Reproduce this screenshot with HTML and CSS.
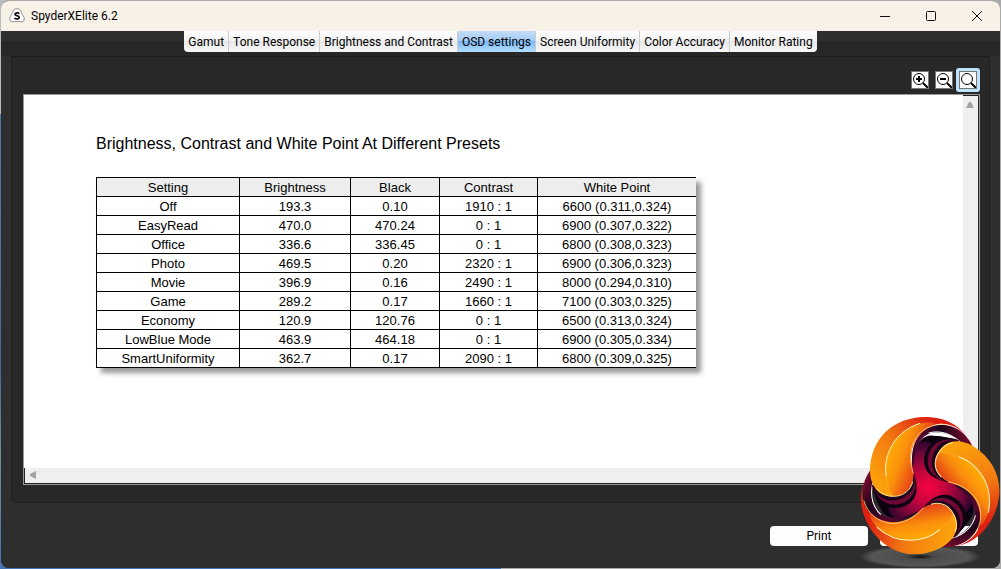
FILE: index.html
```
<!DOCTYPE html>
<html lang="en">
<head>
  <meta charset="UTF-8" />
  <meta name="viewport" content="width=device-width, initial-scale=1.0"/>
  <title>SpyderXElite 6.2</title>
  <link rel="stylesheet" href="styles.css">
</head>
<body>

  <div class="window">
    <header class="titlebar">
      <svg class="app-icon" viewBox="0 0 16 16">
        <path d="M8 .7C10.500.7 11.900 2 12.300 4.200C12.600 6 15.300 8.300 15.300 10.800C15.300 13.600 13 14 11 13.600C9 13.200 7 13.200 5 13.600C3 14 .7 13.600.7 10.800C.7 8.300 3.400 6 3.700 4.200C4.100 2 5.500.7 8 .7Z" fill="#fff" stroke="#777" stroke-width=".8"/>
        <path d="M10.200 5.800C9.300 4.500 5.900 4.600 6 6.400C6.100 8.100 10.200 7.200 10.200 9.300C10.200 11.400 6.500 11.400 5.600 9.800" fill="none" stroke="#111" stroke-width="1.700"/>
      </svg>
      <h1>SpyderXElite 6.2</h1>
      <div class="caption-buttons">
        <button type="button" aria-label="Minimize"><svg viewBox="0 0 12 12"><path d="M1 6.500h10"/></svg></button>
        <button type="button" aria-label="Maximize"><svg viewBox="0 0 12 12"><rect x="1.500" y="1.500" width="9" height="9" rx="1"/></svg></button>
        <button type="button" aria-label="Close"><svg viewBox="0 0 12 12"><path d="M1 1l10 10M11 1L1 11"/></svg></button>
      </div>
    </header>

    <main class="content">
      <nav class="tabs">
        <button type="button">Gamut</button>
        <button type="button">Tone Response</button>
        <button type="button">Brightness and Contrast</button>
        <button type="button" class="active">OSD settings</button>
        <button type="button">Screen Uniformity</button>
        <button type="button">Color Accuracy</button>
        <button type="button">Monitor Rating</button>
      </nav>

      <section class="panel">
        <div class="toolbar">
          <button type="button" aria-label="Zoom in">
            <svg viewBox="0 0 16 16"><circle cx="7" cy="7" r="5.500"/><path d="M11 11l5 5" stroke-width="2"/><path d="M4 7h6M7 4v6" stroke-width="2"/></svg>
          </button>
          <button type="button" aria-label="Zoom out">
            <svg viewBox="0 0 16 16"><circle cx="7" cy="7" r="5.500"/><path d="M11 11l5 5" stroke-width="2"/><path d="M4 7h6" stroke-width="2"/></svg>
          </button>
          <button type="button" class="active" aria-label="Fit">
            <svg viewBox="0 0 16 16"><circle cx="7" cy="7" r="5.500"/><path d="M11 11l5 5" stroke-width="2"/></svg>
          </button>
        </div>

        <div class="viewer">
          <article class="report">
            <h2>Brightness, Contrast and White Point At Different Presets</h2>
            <div class="table-wrap">
              <table>
                <colgroup>
                  <col class="setting"><col class="brightness"><col class="black"><col class="contrast"><col>
                </colgroup>
                <thead>
                  <tr><th>Setting</th><th>Brightness</th><th>Black</th><th>Contrast</th><th>White Point</th></tr>
                </thead>
                <tbody>
                  <tr><td>Off</td><td>193.3</td><td>0.10</td><td>1910 : 1</td><td>6600 (0.311,0.324)</td></tr>
                  <tr><td>EasyRead</td><td>470.0</td><td>470.24</td><td>0 : 1</td><td>6900 (0.307,0.322)</td></tr>
                  <tr><td>Office</td><td>336.6</td><td>336.45</td><td>0 : 1</td><td>6800 (0.308,0.323)</td></tr>
                  <tr><td>Photo</td><td>469.5</td><td>0.20</td><td>2320 : 1</td><td>6900 (0.306,0.323)</td></tr>
                  <tr><td>Movie</td><td>396.9</td><td>0.16</td><td>2490 : 1</td><td>8000 (0.294,0.310)</td></tr>
                  <tr><td>Game</td><td>289.2</td><td>0.17</td><td>1660 : 1</td><td>7100 (0.303,0.325)</td></tr>
                  <tr><td>Economy</td><td>120.9</td><td>120.76</td><td>0 : 1</td><td>6500 (0.313,0.324)</td></tr>
                  <tr><td>LowBlue Mode</td><td>463.9</td><td>464.18</td><td>0 : 1</td><td>6900 (0.305,0.334)</td></tr>
                  <tr><td>SmartUniformity</td><td>362.7</td><td>0.17</td><td>2090 : 1</td><td>6800 (0.309,0.325)</td></tr>
                </tbody>
              </table>
            </div>
          </article>
          <div class="scroll-y"><svg viewBox="0 0 8 6"><path d="M0 6L3 0h2l3 6z"/></svg></div>
          <div class="scroll-x"><svg viewBox="0 0 6 8"><path d="M6 0L0 3v2l6 3z"/></svg></div>
        </div>
      </section>

      <footer class="actions">
        <button type="button">Print</button>
        <button type="button" aria-label="Close report"></button>
      </footer>
    </main>
  </div>

  <svg class="logo" viewBox="0 0 453 492">
    <defs>
      <radialGradient id="floor">
        <stop offset="0" stop-color="#111"/>
        <stop offset=".25" stop-color="#4b4b4b"/>
        <stop offset=".8" stop-color="#565656"/>
        <stop offset="1" stop-color="#565656" stop-opacity="0"/>
      </radialGradient>
      <radialGradient id="hub" gradientUnits="userSpaceOnUse" cx="235" cy="248" r="165">
        <stop offset="0" stop-color="#f8033f"/>
        <stop offset=".3" stop-color="#c4053e"/>
        <stop offset=".65" stop-color="#6b0738"/>
        <stop offset=".88" stop-color="#1d0428"/>
        <stop offset="1" stop-color="#0b0112"/>
      </radialGradient>
      <linearGradient id="leaf" gradientUnits="userSpaceOnUse" x1="112" y1="165" x2="205" y2="200">
        <stop offset="0" stop-color="#ffa906"/>
        <stop offset=".4" stop-color="#fb8f0c"/>
        <stop offset="1" stop-color="#e23a18"/>
      </linearGradient>
      <linearGradient id="rim" gradientUnits="userSpaceOnUse" x1="80" y1="230" x2="250" y2="50">
        <stop offset="0" stop-color="#fba00a"/>
        <stop offset=".5" stop-color="#f27a12"/>
        <stop offset="1" stop-color="#de1f12"/>
      </linearGradient>
      <linearGradient id="ribbon" gradientUnits="userSpaceOnUse" x1="190" y1="180" x2="360" y2="100">
        <stop offset="0" stop-color="#2a0524"/>
        <stop offset=".3" stop-color="#5a0830"/>
        <stop offset=".65" stop-color="#1d041c"/>
        <stop offset="1" stop-color="#7c0a30"/>
      </linearGradient>
      <!-- one blade, repeated three times around the hub -->
      <g id="arm">
        <path d="M236 248L178 238C192 210 182 190 190 150C197 112 222 88 250 92C282 94 310 100 334 116L350 220Z" fill="url(#hub)"/>
        <path d="M212 110C235 84 300 92 332 116C295 108 270 118 250 136C256 114 235 106 212 110Z" fill="#09010c"/>
        <path d="M190 196C180 150 188 100 228 72C280 42 340 66 367 122C352 122 340 117 328 110C300 84 270 80 244 84C212 92 190 126 190 196Z" fill="url(#ribbon)"/>
        <path d="M236 84C272 74 306 88 330 110" fill="none" stroke="#fff" stroke-width="3"/>
      </g>
      <g id="blade">
        <path d="M66 240C74 290 104 316 149 308C193 298 212 263 192 208Z" fill="#0d0113"/>
        <path d="M68 240C80 286 112 303 144 298C184 290 206 258 192 208Z" fill="#6f0833"/>
        <path d="M68 240C84 284 112 289 138 286C178 278 200 250 192 208Z" fill="#1d041c"/>
        <path d="M365 116C330 55 280 36 222 36C130 38 62 100 60 195C60 245 90 278 130 274C166 272 190 244 190 210C188 190 182 175 183 155C186 100 225 62 270 56C312 54 345 80 365 116Z" fill="url(#rim)"/>
        <path d="M130 274C88 222 90 104 204 56C250 48 262 54 250 61C206 78 183 118 183 155C183 180 190 190 190 211C189 248 165 272 130 274Z" fill="url(#leaf)"/>
        <path d="M109 215C98 155 130 80 210 55" fill="none" stroke="#fff3c0" stroke-width="3"/>
        <path d="M130 274C118 260 112 240 109 213" fill="none" stroke="#fbc050" stroke-width="1"/>
        <path d="M80 251C108 285 174 284 188 230" fill="none" stroke="#ffe693" stroke-width="3"/>
        <path d="M190 205C177 170 179 127 197 99C220 66 260 51 298 61" fill="none" stroke="#ffe08a" stroke-width="2"/>
      </g>
    </defs>
    <ellipse cx="210" cy="455" rx="182" ry="34" fill="url(#floor)"/>
    <use href="#arm"/>
    <use href="#arm" transform="rotate(120 235 248)"/>
    <use href="#arm" transform="rotate(240 235 248)"/>
    <circle cx="235" cy="248" r="80" fill="url(#hub)"/>
    <use href="#blade"/>
    <use href="#blade" transform="rotate(120 235 248)"/>
    <use href="#blade" transform="rotate(240 235 248)"/>
  </svg>

</body>
</html>
```
FILE: styles.css
```
* {
  box-sizing: border-box;
}
body {
  margin: 0;
  height: 100vh;
  padding: 0 1px 1px;
  background: linear-gradient(to right, transparent 50%, #aaa 50%), linear-gradient(to bottom, #b9bcbc 20%, #5577a8 20%, #48699c 65%, #6d8f95 80%, #4573b8);
  font-family: Roboto, 'Noto Sans', sans-serif;
  font-size: 12px;
  color: #000;
  position: relative;
}
button {
  font: inherit;
  color: inherit;
  border: none;
  padding: 0;
}
.window {
  height: 100%;
  display: flex;
  flex-direction: column;
  border-radius: 8px;
  border-top: 1px solid #aaa;
  overflow: hidden;
  background: #2e2e2e;
}
.titlebar {
  display: flex;
  align-items: center;
  height: 30px;
  padding-left: 8px;
  background: #f8f1e8;
}
.app-icon {
  width: 16px;
  height: 16px;
  margin-right: 6px;
}
h1 {
  margin: 0;
  font-size: 12px;
  font-weight: normal;
}
.caption-buttons {
  display: flex;
  margin-left: auto;
}
.caption-buttons button {
  width: 46px;
  height: 30px;
  background: none;
}
.caption-buttons svg {
  display: block;
  width: 12px;
  height: 12px;
  margin: auto;
  fill: none;
  stroke: #111;
}
.content {
  flex: 1;
  display: flex;
  flex-direction: column;
  background: linear-gradient(to bottom, #2e2e2e 11px, #1f1f1f 11px, #282828 13px, #282828 25px, #2e2e2e 25px);
}
.tabs {
  display: flex;
  align-self: center;
  height: 21px;
  border-radius: 0 0 4px 4px;
  overflow: hidden;
}
.tabs button {
  padding: 0 4px;
  border-right: 1px solid #ccc;
  background: linear-gradient(to bottom, #fff, #f0f0f0 50%, #e8e8e8 50%, #f8f8f8);
}
.tabs button:last-child {
  border-right: none;
}
.tabs .active {
  background: linear-gradient(to bottom, #c2dcf6, #a2cbf5 50%, #7bb6f4 50%, #b3e0ff);
}
.panel {
  flex: 1;
  display: flex;
  flex-direction: column;
  margin: 4px 10px 0;
  padding: 11px 9px 17px 11px;
  border: 1px solid #1d1d1d;
  border-radius: 0 0 5px 5px;
  background: #282828;
}
.toolbar {
  display: flex;
  justify-content: flex-end;
  height: 26px;
}
.toolbar button {
  width: 24px;
  height: 24px;
  padding: 3px;
  border-radius: 3px;
  background: none;
}
.toolbar .active {
  background: #bfe3fa;
}
.toolbar svg {
  display: block;
  width: 18px;
  height: 18px;
  border: 1px solid #777;
  background: #fff;
  fill: none;
  stroke: #000;
}
.viewer {
  flex: 1;
  display: grid;
  grid-template-columns: 1fr 16px;
  grid-template-rows: 1fr 16px;
  border: 1px solid #999;
  background: #fff;
}
.report {
  padding: 39px 72px 0;
  font-family: 'Liberation Sans', Arial, sans-serif;
}
h2 {
  margin: 0 0 24px;
  font-size: 16px;
  font-weight: normal;
  line-height: 19px;
}
.table-wrap {
  width: 600px;
  box-shadow: 5px 5px 5px #999;
}
table {
  width: 100%;
  table-layout: fixed;
  border-collapse: collapse;
  font-size: 13px;
  line-height: 16px;
  text-align: center;
}
.setting {
  width: 143px;
}
.brightness {
  width: 111px;
}
.black {
  width: 89px;
}
.contrast {
  width: 98px;
}
th, td {
  padding: 2px 0 0;
  border: 1px solid #000;
  background: #fff;
  font-weight: normal;
}
th {
  background: #ededed;
}
th:last-child, td:last-child {
  border-right: none;
}
.scroll-y, .scroll-x {
  background: #efefef;
}
.scroll-y {
  padding: 5px 3px;
  border-top: 1px solid #222;
  border-right: 1px solid #222;
}
.scroll-x {
  grid-column: 1 / 3;
  padding: 3px 5px;
  border-left: 1px solid #222;
  border-bottom: 1px solid #222;
}
.scroll-y svg, .scroll-x svg {
  display: block;
  height: 8px;
  fill: #a3a3a3;
}
.scroll-y svg {
  width: 8px;
}
.actions {
  display: flex;
  justify-content: flex-end;
  gap: 12px;
  padding: 23px 22px 22px;
}
.actions button {
  width: 98px;
  height: 20px;
  border-radius: 4px;
  background: #fdfdfd;
}
.logo {
  position: absolute;
  right: 0;
  bottom: 0;
  width: 151px;
  height: 164px;
}
```
